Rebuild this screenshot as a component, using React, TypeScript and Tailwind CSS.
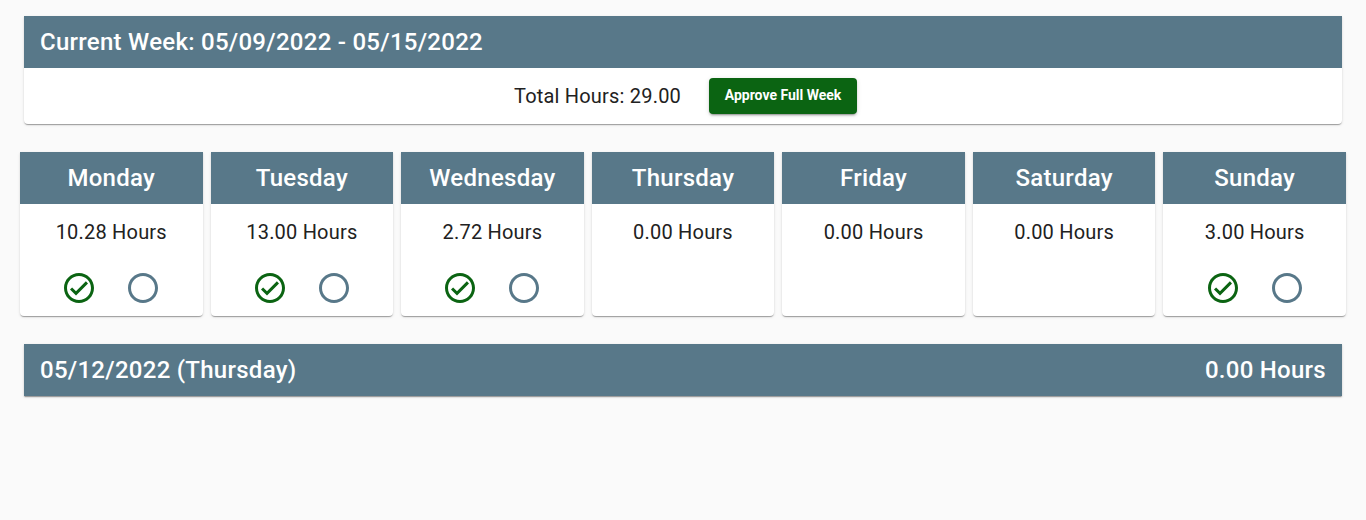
const days = [
  { name: "Monday", hours: "10.28", marked: true },
  { name: "Tuesday", hours: "13.00", marked: true },
  { name: "Wednesday", hours: "2.72", marked: true },
  { name: "Thursday", hours: "0.00", marked: false },
  { name: "Friday", hours: "0.00", marked: false },
  { name: "Saturday", hours: "0.00", marked: false },
  { name: "Sunday", hours: "3.00", marked: true },
];

const cardShadow =
  "shadow-[0_2px_1px_-1px_rgba(0,0,0,0.2),0_1px_1px_0_rgba(0,0,0,0.14),0_1px_3px_0_rgba(0,0,0,0.12)]";

function CheckIcon() {
  return (
    <svg viewBox="0 0 24 24" className="w-9 h-9 fill-[#0b6412]">
      <path d="M12 2C6.48 2 2 6.48 2 12s4.48 10 10 10 10-4.48 10-10S17.52 2 12 2zm0 18c-4.41 0-8-3.59-8-8s3.59-8 8-8 8 3.59 8 8-3.59 8-8 8zm4.59-12.42L10 14.17l-2.59-2.58L6 13l4 4 8-8z" />
    </svg>
  );
}

function CircleIcon() {
  return (
    <svg viewBox="0 0 24 24" className="w-9 h-9 fill-[#587889]">
      <path d="M12 2C6.48 2 2 6.48 2 12s4.48 10 10 10 10-4.48 10-10S17.52 2 12 2zm0 18c-4.42 0-8-3.58-8-8s3.58-8 8-8 8 3.58 8 8-3.58 8-8 8z" />
    </svg>
  );
}

export default function App() {
  return (
    <div className="min-h-[520px] bg-[#fafafa] font-['Roboto',sans-serif] pt-4 px-5 text-[#212121]">
      <div className={`mx-1 bg-white rounded-b ${cardShadow}`}>
        <div className="h-[52px] bg-[#587889] px-4 flex items-center text-white text-2xl font-medium tracking-[0.27px]">
          Current Week: 05/09/2022 - 05/15/2022
        </div>
        <div className="h-14 flex items-center justify-center gap-7 pl-[5px]">
          <span className="text-xl tracking-[0.2px]">Total Hours: 29.00</span>
          <button className="h-9 w-[148px] pb-0.5 rounded bg-[#0b6412] text-white text-sm font-bold shadow-[0_3px_1px_-2px_rgba(0,0,0,0.2),0_2px_2px_0_rgba(0,0,0,0.14),0_1px_5px_0_rgba(0,0,0,0.12)]">
            Approve Full Week
          </button>
        </div>
      </div>

      <div className="grid grid-cols-7 gap-2 mt-7">
        {days.map((day) => (
          <div key={day.name} className={`h-[164px] bg-white rounded-b ${cardShadow}`}>
            <div className="h-[52px] bg-[#587889] flex items-center justify-center text-white text-2xl font-medium tracking-[0.27px]">
              {day.name}
            </div>
            <div className="text-xl text-center mt-4 leading-6 tracking-[0.2px]">{day.hours} Hours</div>
            {day.marked && (
              <div className="flex justify-center gap-7 mt-[26px]">
                <CheckIcon />
                <CircleIcon />
              </div>
            )}
          </div>
        ))}
      </div>

      <div className={`mx-1 mt-7 h-[52px] bg-[#587889] px-4 flex items-center justify-between text-white text-2xl font-medium tracking-[0.27px] ${cardShadow}`}>
        <span>05/12/2022 (Thursday)</span>
        <span>0.00 Hours</span>
      </div>
    </div>
  );
}
